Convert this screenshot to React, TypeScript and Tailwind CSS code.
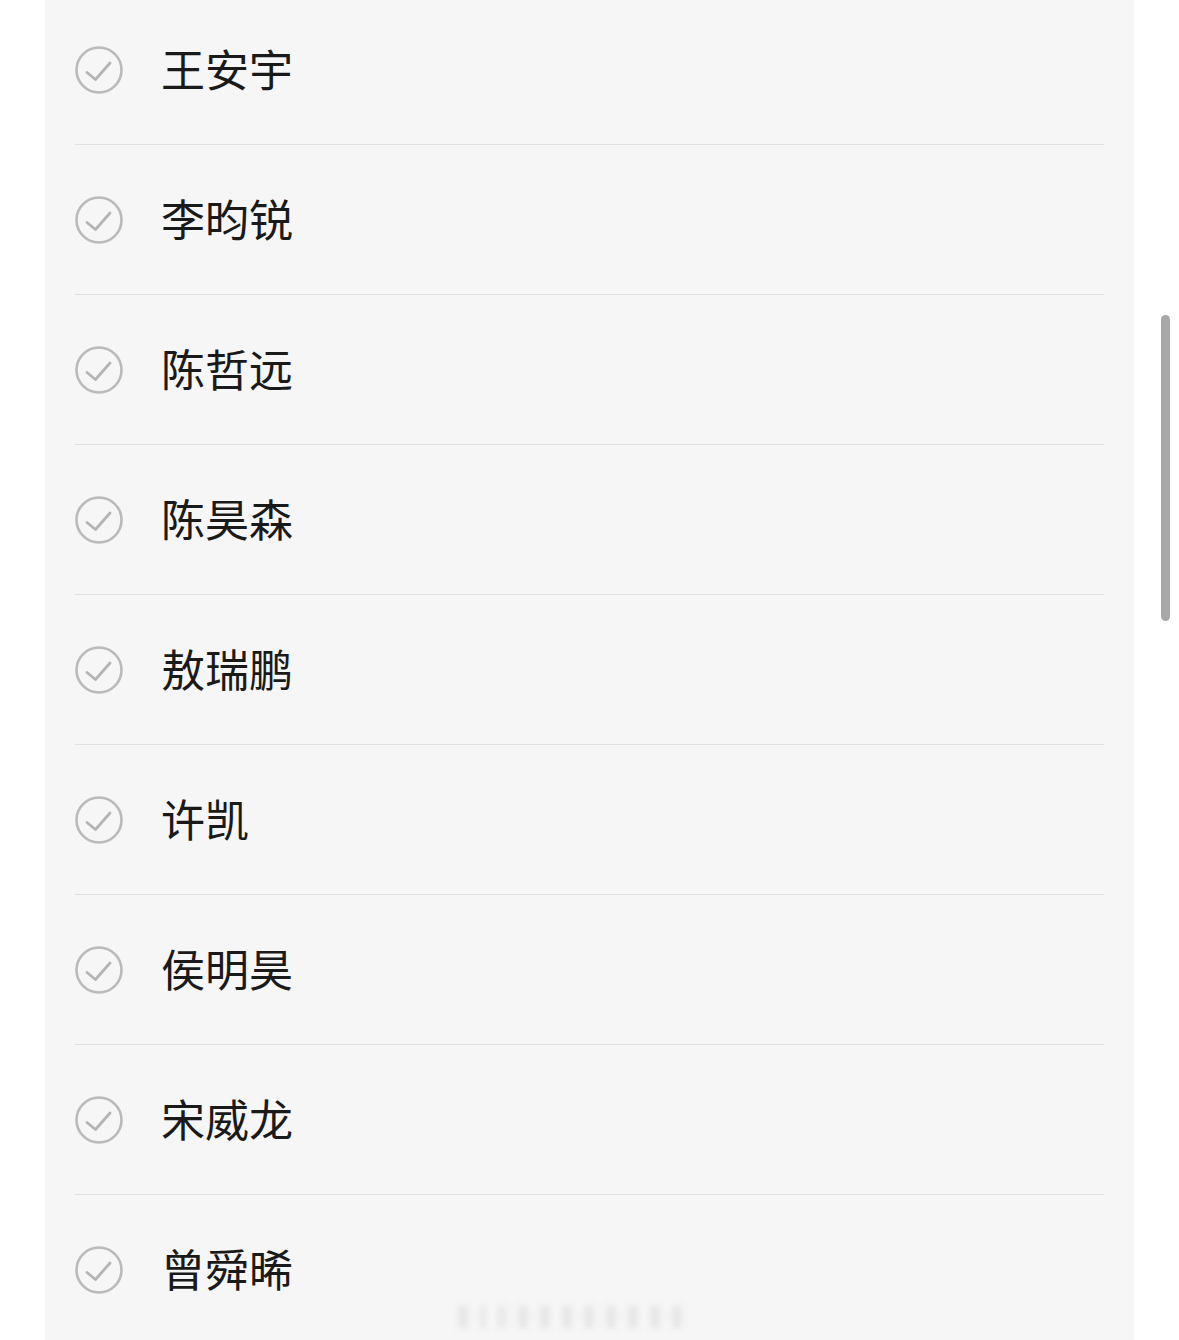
import React from "react";

const names = [
  "王安宇",
  "李昀锐",
  "陈哲远",
  "陈昊森",
  "敖瑞鹏",
  "许凯",
  "侯明昊",
  "宋威龙",
  "曾舜晞",
];

function CheckCircle() {
  return (
    <svg width="48" height="48" viewBox="0 0 48 48" fill="none" className="shrink-0">
      <circle cx="24" cy="24" r="22.5" stroke="#bababa" strokeWidth="2.6" />
      <path
        d="M12 26.5l8.5 7 14.5-16.5"
        stroke="#b4b4b4"
        strokeWidth="2.8"
        strokeLinecap="round"
        strokeLinejoin="round"
      />
    </svg>
  );
}

export default function App() {
  return (
    <div className="relative flex h-[1340px] w-[1179px] overflow-hidden bg-white">
      <div className="ml-[45px] h-full w-[1089px] bg-[#f6f6f6] px-[30px]">
        <ul className="-mt-[5px]">
          {names.map((name) => (
            <li
              key={name}
              className="flex h-[150px] items-center gap-[38px] border-b border-[#e0e0e0]"
            >
              <CheckCircle />
              <span
                className="mb-[4px] text-[44px] leading-none text-[#1a1a1a]"
                style={{ fontFamily: '"Noto Sans CJK SC", "Noto Sans", sans-serif' }}
              >
                {name}
              </span>
            </li>
          ))}
        </ul>
      </div>
      <div className="ml-[27px] mt-[315px] h-[306px] w-[9px] rounded-full bg-[#a8a8a8]" />
      <div className="absolute bottom-[12px] left-[458px] flex h-[28px] w-[258px] items-end gap-[12px] blur-[3px]">
        {[10, 6, 8, 10, 10, 10, 10, 10, 10, 10, 10].map((w, i) => (
          <div key={i} className="h-[22px] bg-[#e6e6e6]" style={{ width: w }} />
        ))}
      </div>
    </div>
  );
}
